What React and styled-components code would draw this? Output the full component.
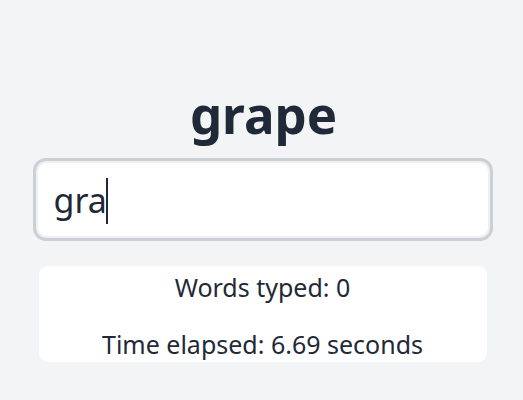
import React, { useState } from 'react';
import styled, { createGlobalStyle } from 'styled-components';

const GlobalStyle = createGlobalStyle`
  html, body {
    margin: 0;
    padding: 0;
    background: #f3f4f6;
  }
  body {
    font-family: "Noto Sans", "Open Sans", sans-serif;
    color: #1f2937;
  }
`;

const Page = styled.div`
  min-height: 400px;
  display: flex;
  flex-direction: column;
  align-items: center;
  padding-top: 82px;
  box-sizing: border-box;
`;

const Word = styled.h1`
  margin: 0 0 12px 4px;
  font-size: 51px;
  line-height: 64px;
  font-weight: 700;
  color: #1f2937;
`;

const InputWrap = styled.div`
  position: relative;
  width: 460px;
  height: 83px;
  box-sizing: border-box;
  border: 3px solid #cbcfd6;
  border-radius: 13px;
  background: #eef0f3;
  padding: 2px;
  margin-left: 2px;
`;

const TypeInput = styled.input`
  width: 100%;
  height: 100%;
  box-sizing: border-box;
  border: none;
  outline: none;
  border-radius: 9px;
  background: #fff;
  padding: 0 16px;
  font-family: "Noto Sans", "Open Sans", sans-serif;
  font-size: 34px;
  color: #1f2937;
  caret-color: transparent;
`;

const CaretLayer = styled.div`
  position: absolute;
  top: 0;
  bottom: 0;
  left: 18px;
  display: flex;
  align-items: center;
  pointer-events: none;
  font-family: "Noto Sans", "Open Sans", sans-serif;
  font-size: 34px;
`;

const Ghost = styled.span`
  visibility: hidden;
  white-space: pre;
`;

const Caret = styled.span`
  display: block;
  width: 2px;
  height: 46px;
  margin-top: 2px;
  margin-left: -1px;
  background: #1f2937;
`;

const Stats = styled.div`
  width: 448px;
  margin-top: 25px;
  margin-left: 2px;
  background: #fff;
  border-radius: 9px;
  padding: 4px 0 0;
  display: flex;
  flex-direction: column;
  align-items: center;
  gap: 22px;
`;

const Stat = styled.p`
  margin: 0;
  font-size: 25px;
  line-height: 35px;
  color: #1f2937;
`;

export default function App() {
  const [value, setValue] = useState('gra');
  return (
    <>
      <GlobalStyle />
      <Page>
        <Word>grape</Word>
        <InputWrap>
          <TypeInput autoFocus value={value} onChange={(e) => setValue(e.target.value)} />
          <CaretLayer>
            <Ghost>{value}</Ghost>
            <Caret />
          </CaretLayer>
        </InputWrap>
        <Stats>
          <Stat>Words typed: 0</Stat>
          <Stat>Time elapsed: 6.69 seconds</Stat>
        </Stats>
      </Page>
    </>
  );
}
